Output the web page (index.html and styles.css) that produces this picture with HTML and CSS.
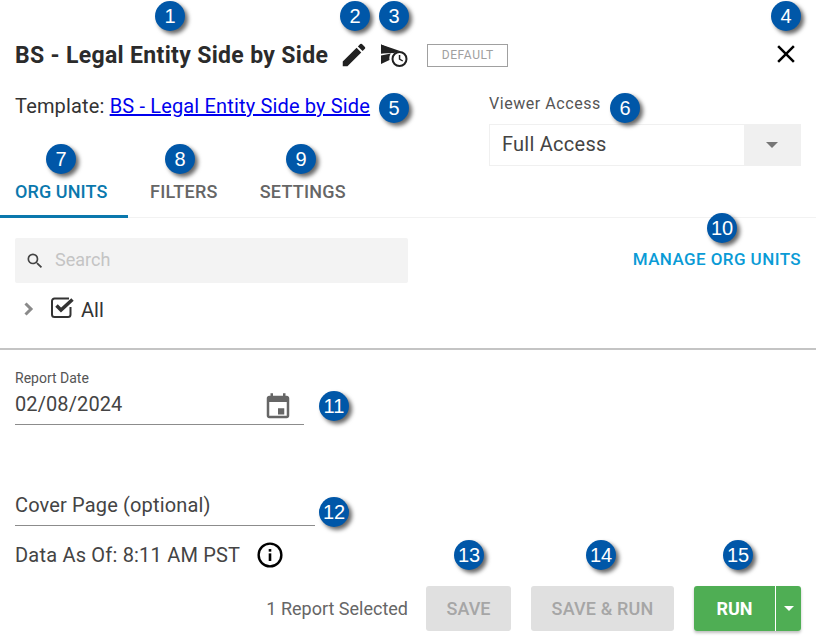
FILE: index.html
```html
<!DOCTYPE html>
<html lang="en">
<head>
    <meta charset="UTF-8">
    <title>Report Settings</title>
    <link rel="stylesheet" href="styles.css">
</head>
<body>
    <div id="app">
        <!-- Title row -->
        <div class="title-row">
            <h1>BS - Legal Entity Side by Side</h1>
            <svg class="icon edit-icon" viewBox="0 0 24 24"><path d="M3 17.25V21h3.75L17.81 9.94l-3.75-3.75L3 17.25zM20.71 7.04a1 1 0 0 0 0-1.41l-2.34-2.34a1 1 0 0 0-1.41 0l-1.83 1.83 3.75 3.75 1.83-1.83z"/></svg>
            <svg class="icon schedule-icon" viewBox="0 0 28 25"><path d="M1 1.500 16 8 1 10.500z"/><path d="M1 12.500 11 10.500C9.500 12 9 15 9.500 17L1 21z"/><path d="M1 1.500 20 8 14 10 1 10.500z"/><circle cx="19.500" cy="16" r="7" fill="#fff" stroke="#212121" stroke-width="2"/><path d="M18.800 12h1.500v3.700l2.800 1.700-.7 1.200-3.600-2.200z"/></svg>
            <span class="default-tag">DEFAULT</span>
            <svg class="close-icon" viewBox="0 0 24 24"><path d="M19 6.41 17.59 5 12 10.59 6.41 5 5 6.41 10.59 12 5 17.59 6.41 19 12 13.41 17.59 19 19 17.59 13.41 12z"/></svg>
        </div>

        <!-- Template link and viewer access -->
        <div class="meta-row">
            <p class="template">Template: <a href="#">BS - Legal Entity Side by Side</a></p>
            <div class="viewer">
                <label>Viewer Access</label>
                <div class="select">
                    <span>Full Access</span>
                    <div class="select-arrow"><i class="caret"></i></div>
                </div>
            </div>
        </div>

        <!-- Tabs -->
        <div class="tabs">
            <a class="tab active" href="#">ORG UNITS</a>
            <a class="tab" href="#">FILTERS</a>
            <a class="tab" href="#">SETTINGS</a>
        </div>

        <!-- Org units -->
        <div class="org-units">
            <div class="org-top">
                <div class="search">
                    <svg viewBox="0 0 24 24"><path d="M15.5 14h-.79l-.28-.27A6.47 6.47 0 0 0 16 9.5 6.5 6.5 0 1 0 9.5 16c1.61 0 3.09-.59 4.23-1.57l.27.28v.79l5 4.99L20.49 19l-4.99-5zm-6 0C7.01 14 5 11.99 5 9.5S7.01 5 9.5 5 14 7.01 14 9.5 11.99 14 9.5 14z"/></svg>
                    <span>Search</span>
                </div>
                <a class="manage" href="#">MANAGE ORG UNITS</a>
            </div>
            <div class="tree-row">
                <svg class="chevron" viewBox="0 0 12 14"><path d="M2.500 1.500 8 7l-5.500 5.500" fill="none" stroke="#8a8a8a" stroke-width="3"/></svg>
                <svg class="check" viewBox="0 0 24 22"><path d="M19.500 10v7.500a2.500 2.500 0 0 1-2.500 2.500H3.500A2.500 2.500 0 0 1 1 17.500V4a2.500 2.500 0 0 1 2.500-2.500H18" fill="none" stroke="#333" stroke-width="2"/><path d="M5.500 8.500 10 13 21.500 2.500" fill="none" stroke="#333" stroke-width="3.500"/></svg>
                <span class="tree-label">All</span>
            </div>
        </div>

        <!-- Report fields -->
        <div class="fields">
            <div class="date-field">
                <label>Report Date</label>
                <div class="date-value">
                    <span>02/08/2024</span>
                    <svg viewBox="0 0 24 24"><path d="M19 3h-1V1h-2v2H8V1H6v2H5c-1.100 0-2 .9-2 2v14c0 1.100.9 2 2 2h14c1.100 0 2-.9 2-2V5c0-1.100-.9-2-2-2zm0 16H5V8h14v11zm-2-6h-5v5h5v-5z"/></svg>
                </div>
            </div>
            <div class="cover-field">Cover Page (optional)</div>
            <div class="data-as-of">
                <span>Data As Of: 8:11 AM PST</span>
                <svg viewBox="0 0 24 24"><circle cx="12" cy="12" r="10.500" fill="none" stroke="#000" stroke-width="2.200"/><rect x="10.800" y="10.500" width="2.400" height="7"/><rect x="10.800" y="6.500" width="2.400" height="2.400"/></svg>
            </div>
        </div>

        <!-- Footer actions -->
        <div class="actions">
            <span class="selected">1 Report Selected</span>
            <button class="btn save-btn" disabled>SAVE</button>
            <button class="btn save-run-btn" disabled>SAVE &amp; RUN</button>
            <div class="run-group">
                <button class="btn run-btn">RUN</button>
                <button class="btn run-menu"><i class="caret white"></i></button>
            </div>
        </div>

        <!-- Numbered callouts -->
        <span class="badge b1">1</span>
        <span class="badge b2">2</span>
        <span class="badge b3">3</span>
        <span class="badge b4">4</span>
        <span class="badge b5">5</span>
        <span class="badge b6">6</span>
        <span class="badge b7">7</span>
        <span class="badge b8">8</span>
        <span class="badge b9">9</span>
        <span class="badge b10">10</span>
        <span class="badge b11">11</span>
        <span class="badge b12">12</span>
        <span class="badge b13">13</span>
        <span class="badge b14">14</span>
        <span class="badge b15">15</span>
    </div>
</body>
</html>
```

FILE: styles.css
```css
/* Page */
body {
    margin: 0;
    font-family: Roboto, "Liberation Sans", sans-serif;
    color: #333;
    background: #fff;
}

#app {
    position: relative;
    width: 816px;
    height: 638px;
    overflow: hidden;
}

/* Title row */
.title-row {
    display: flex;
    align-items: center;
    height: 40px;
    padding: 35px 5px 0 15px;
}

h1 {
    margin: 0;
    font-size: 23px;
    font-weight: 700;
    letter-spacing: 0.33px;
    color: #2b2b2b;
    white-space: nowrap;
}

.icon {
    width: 30px;
    height: 30px;
    fill: #212121;
}

.edit-icon {
    margin-left: 11px;
}

.schedule-icon {
    width: 28px;
    height: 25px;
    margin-left: 11px;
    margin-top: 1px;
}

.default-tag {
    margin-left: 19px;
    margin-top: 1px;
    width: 79px;
    height: 21px;
    line-height: 21px;
    border: 1px solid #a0a0a0;
    text-align: center;
    font-size: 12px;
    letter-spacing: 0.6px;
    color: #a0a0a0;
}

.close-icon {
    width: 30px;
    height: 30px;
    margin-left: auto;
    margin-right: 10px;
    margin-top: -3px;
}

/* Template link and viewer access */
.meta-row {
    display: flex;
    justify-content: space-between;
    padding: 0 15px;
    height: 93px;
}

.template {
    margin: 19px 0 0 0;
    font-size: 20px;
    line-height: 24px;
    letter-spacing: 0.16px;
    color: #333;
}

.template a {
    color: #0000ee;
}

.viewer {
    width: 312px;
    padding-top: 19px;
}

.viewer label {
    display: block;
    font-size: 16px;
    line-height: 20px;
    letter-spacing: 0.55px;
    color: #555;
}

.select {
    display: flex;
    align-items: center;
    justify-content: space-between;
    height: 40px;
    margin-top: 10px;
    border: 1px solid #f0f0f0;
    font-size: 20px;
    letter-spacing: 0.25px;
    color: #444;
}

.select span {
    padding-left: 12px;
    margin-top: -2px;
}

.select-arrow {
    display: flex;
    align-items: center;
    justify-content: center;
    width: 56px;
    height: 40px;
    background: #f0f0f0;
}

.caret {
    width: 0;
    height: 0;
    border-left: 6px solid transparent;
    border-right: 6px solid transparent;
    border-top: 6px solid #777;
}

.caret.white {
    border-left-width: 5px;
    border-right-width: 5px;
    border-top: 5px solid #fff;
}

/* Tabs */
.tabs {
    display: flex;
    height: 50px;
    box-sizing: border-box;
    border-bottom: 1px solid #f2f2f2;
}

.tab {
    display: block;
    height: 50px;
    box-sizing: border-box;
    padding: 13px 20px 0 15px;
    font-size: 18px;
    line-height: 22px;
    font-weight: 500;
    letter-spacing: 0.25px;
    text-decoration: none;
    color: #666;
}

.tab:nth-child(2) {
    padding-left: 22px;
    padding-right: 21px;
}

.tab:nth-child(3) {
    padding-left: 21px;
}

.tab.active {
    width: 128px;
    padding-right: 0;
    letter-spacing: 0.1px;
    color: #0a78ad;
    border-bottom: 3px solid #0a78ad;
}

/* Org units */
.org-units {
    height: 132px;
    box-sizing: border-box;
    padding: 20px 15px 0 15px;
    border-bottom: 2px solid #c4c4c4;
}

.org-top {
    display: flex;
    justify-content: space-between;
    align-items: center;
}

.search {
    display: flex;
    align-items: center;
    width: 393px;
    height: 45px;
    border-radius: 2px;
    background: #f3f3f3;
    font-size: 18px;
    line-height: 20px;
    color: #c4c4c4;
}

.search span {
    margin-top: -2px;
}

.search svg {
    width: 20px;
    height: 20px;
    margin-left: 10px;
    margin-right: 10px;
    fill: #444;
}

.manage {
    margin-top: -3px;
    font-size: 17px;
    font-weight: 500;
    letter-spacing: 0.42px;
    text-decoration: none;
    color: #0a9bd6;
}

.tree-row {
    display: flex;
    align-items: center;
    height: 40px;
    margin-top: 6px;
    font-size: 20px;
    color: #333;
}

.tree-label {
    margin-top: 2px;
}

.chevron {
    width: 12px;
    height: 14px;
    margin-left: 8px;
}

.check {
    width: 24px;
    height: 22px;
    margin-left: 16px;
    margin-right: 6px;
    margin-top: -3px;
}

/* Report fields */
.fields {
    padding: 0 15px;
}

.date-field {
    width: 289px;
    height: 75px;
    box-sizing: border-box;
    padding-top: 19px;
    border-bottom: 1px solid #8c8c8c;
}

.date-field label {
    display: block;
    font-size: 14px;
    line-height: 18px;
    color: #555;
}

.date-value {
    display: flex;
    justify-content: space-between;
    height: 30px;
    padding-top: 3px;
    font-size: 20px;
    line-height: 28px;
    letter-spacing: 0.1px;
    color: #444;
}

.date-value svg {
    width: 30px;
    height: 30px;
    margin-right: 11px;
    margin-top: 2px;
    fill: #666;
}

.cover-field {
    width: 300px;
    height: 51px;
    margin-top: 50px;
    box-sizing: border-box;
    border-bottom: 1px solid #8c8c8c;
    padding-top: 18px;
    font-size: 20px;
    line-height: 24px;
    letter-spacing: 0.15px;
    color: #444;
}

.data-as-of {
    display: flex;
    align-items: center;
    height: 28px;
    margin-top: 15px;
    font-size: 20px;
    letter-spacing: 0.2px;
    color: #444;
}

.data-as-of svg {
    width: 26px;
    height: 26px;
    margin-left: 17px;
}

/* Footer actions */
.actions {
    display: flex;
    align-items: center;
    justify-content: flex-end;
    height: 45px;
    margin-top: 17px;
    padding-right: 15px;
}

.selected {
    margin-right: 18px;
    font-size: 18px;
    color: #666;
}

.btn {
    height: 45px;
    border: none;
    border-radius: 3px;
    font-family: inherit;
    font-size: 18px;
    font-weight: 500;
}

.save-btn,
.save-run-btn {
    background: #e0e0e0;
    color: #a6a6a6;
}

.save-btn {
    width: 85px;
    margin-right: 20px;
}

.save-run-btn {
    width: 143px;
    margin-right: 20px;
    letter-spacing: 0.15px;
}

.run-group {
    display: flex;
    gap: 1px;
    border-radius: 3px;
    box-shadow: 0 2px 3px rgba(0, 0, 0, 0.25);
}

.run-btn {
    width: 81px;
    border-radius: 3px 0 0 3px;
    background: #4fae54;
    color: #fff;
    font-weight: 700;
}

.run-menu {
    display: flex;
    align-items: center;
    justify-content: center;
    width: 25px;
    padding: 0;
    border-radius: 0 3px 3px 0;
    background: #4fae54;
}

/* Numbered callouts */
.badge {
    position: absolute;
    width: 30px;
    height: 30px;
    line-height: 30px;
    border-radius: 50%;
    text-align: center;
    font-family: "Liberation Sans", Arial, sans-serif;
    font-size: 20px;
    color: #fff;
    background: #0057a8;
    box-shadow: 3px 3px 4px rgba(0, 0, 0, 0.6);
}

.b1 { left: 155px; top: 1px; }
.b2 { left: 340px; top: 1px; }
.b3 { left: 379px; top: 1px; }
.b4 { left: 771px; top: 1px; }
.b5 { left: 379px; top: 93px; }
.b6 { left: 610px; top: 93px; }
.b7 { left: 46px; top: 144px; }
.b8 { left: 165px; top: 144px; }
.b9 { left: 286px; top: 144px; }
.b10 { left: 707px; top: 213px; }
.b11 { left: 319px; top: 391px; }
.b12 { left: 319px; top: 497px; }
.b13 { left: 454px; top: 540px; }
.b14 { left: 586px; top: 540px; }
.b15 { left: 723px; top: 540px; }
```
